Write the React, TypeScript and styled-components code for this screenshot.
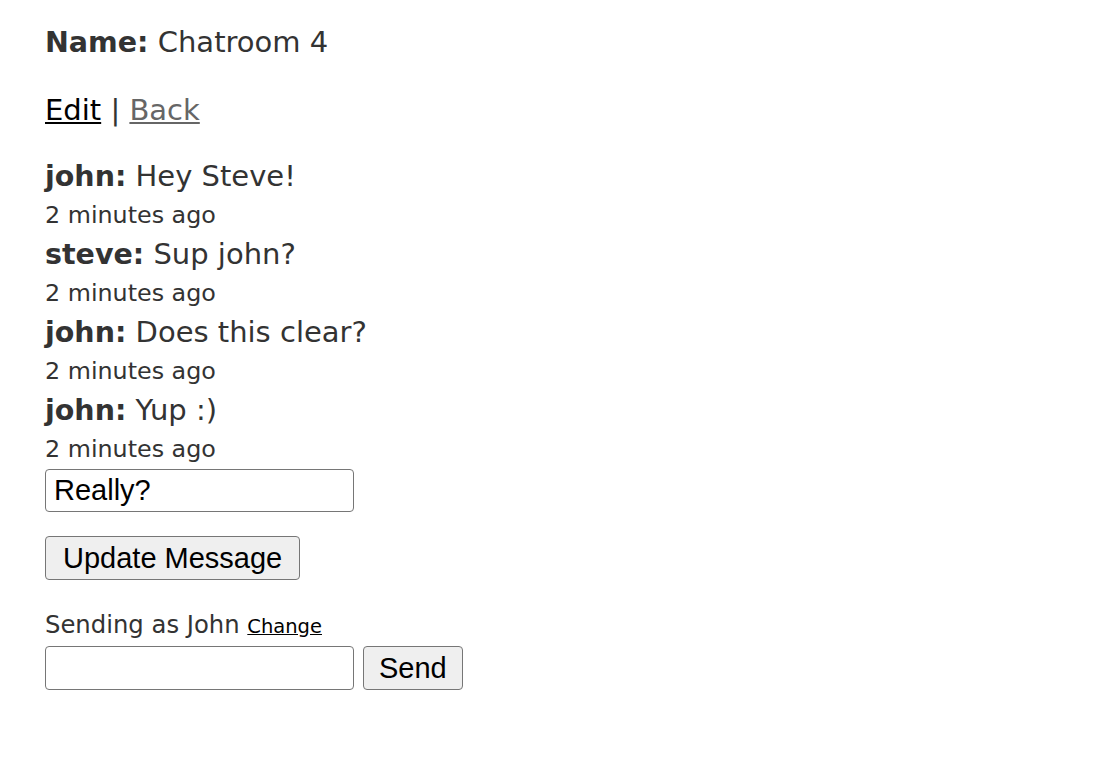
import { useState } from "react";
import styled, { createGlobalStyle } from "styled-components";

const GlobalStyle = createGlobalStyle`
  body {
    margin: 0;
    background: #fff;
    color: #333;
    font-family: "DejaVu Sans", Verdana, sans-serif;
  }
`

const Page = styled.div`
  padding: 23px 45px;
`

const Field = styled.p`
  margin: 0 0 29px;
  font-size: 29px;
  line-height: 39px;
`

const Label = styled.strong`
  font-weight: bold;
  font-size: 28.5px;
`

const Nav = styled.p`
  margin: 0 0 27px;
  font-size: 29px;
  line-height: 39px;
`

const NavLink = styled.a<{ $visited?: boolean }>`
  color: ${({ $visited }) => ($visited ? "#666" : "#000")};
  text-decoration: underline;
`

const Messages = styled.div`
  display: flex;
  flex-direction: column;
`

const Message = styled.div`
  display: flex;
  flex-direction: column;
`

const Body = styled.div`
  font-size: 29px;
  line-height: 39px;
`

const Stamp = styled.div`
  font-size: 23.8px;
  line-height: 39px;
`

const EditForm = styled.form`
  display: flex;
  flex-direction: column;
  align-items: flex-start;
  gap: 24px;
  margin: 0 0 30px;
`

const TextInput = styled.input<{ $tall?: boolean }>`
  box-sizing: border-box;
  width: 309px;
  height: ${({ $tall }) => ($tall ? "44px" : "43px")};
  padding: 0 8px;
  border: 1px solid #767676;
  border-radius: 4px;
  font-family: "Liberation Sans", Arial, sans-serif;
  font-size: 29px;
  color: #000;
  background: #fff;
`

const Button = styled.button<{ $pad?: number }>`
  box-sizing: border-box;
  height: 44px;
  padding: 0 ${({ $pad }) => $pad ?? 17}px;
  border: 1px solid #767676;
  border-radius: 4px;
  background: #efefef;
  font-family: "Liberation Sans", Arial, sans-serif;
  font-size: 29px;
  color: #000;
`

const Composer = styled.div`
  display: flex;
  flex-direction: column;
  gap: 4px;
`

const Note = styled.div`
  font-size: 24.3px;
  line-height: 30px;
`

const ChangeLink = styled.a`
  font-size: 19.5px;
  color: #000;
  text-decoration: underline;
`

const SendRow = styled.form`
  display: flex;
  gap: 9px;
`

const messages = [
  { author: "john", text: "Hey Steve!", time: "2 minutes ago" },
  { author: "steve", text: "Sup john?", time: "2 minutes ago" },
  { author: "john", text: "Does this clear?", time: "2 minutes ago" },
  { author: "john", text: "Yup :)", time: "2 minutes ago" },
]

export default function App() {
  const [edit, setEdit] = useState("Really?")
  const [draft, setDraft] = useState("")

  return (
    <Page>
      <GlobalStyle />
      <Field>
        <Label>Name:</Label> Chatroom 4
      </Field>
      <Nav>
        <NavLink href="#">Edit</NavLink> | <NavLink href="#" $visited>Back</NavLink>
      </Nav>
      <Messages>
        {messages.map((m, i) => (
          <Message key={i}>
            <Body>
              <Label>{m.author}:</Label> {m.text}
            </Body>
            <Stamp>{m.time}</Stamp>
          </Message>
        ))}
      </Messages>
      <EditForm onSubmit={(e) => e.preventDefault()}>
        <TextInput value={edit} onChange={(e) => setEdit(e.currentTarget.value)} />
        <Button type="submit">Update Message</Button>
      </EditForm>
      <Composer>
        <Note>
          Sending as John <ChangeLink href="#">Change</ChangeLink>
        </Note>
        <SendRow onSubmit={(e) => e.preventDefault()}>
          <TextInput $tall value={draft} onChange={(e) => setDraft(e.currentTarget.value)} />
          <Button type="submit" $pad={15}>Send</Button>
        </SendRow>
      </Composer>
    </Page>
  )
}
